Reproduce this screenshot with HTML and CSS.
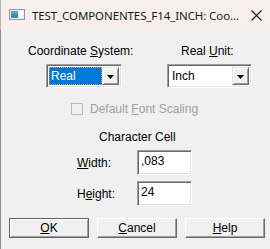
FILE: index.html
```html
<!DOCTYPE html>
<html>
<head>
<meta charset="utf-8">
<link rel="stylesheet" href="styles.css">
</head>
<body>
<div class="window">
  <div class="titlebar">
    <svg class="appicon" width="16" height="11" viewBox="0 0 16 11">
      <rect x="0.5" y="0.5" width="15" height="10" fill="#e8eef2" stroke="#8a9aa6"/>
      <rect x="2" y="2" width="7" height="7" fill="#3f8f8a"/>
      <rect x="2" y="2" width="7" height="3" fill="#5aa0d8"/>
      <rect x="10" y="2" width="4" height="7" fill="#ffffff"/>
    </svg>
    <span class="title">TEST_COMPONENTES_F14_INCH: Coo...</span>
    <svg class="close" width="11" height="11" viewBox="0 0 11 11">
      <path d="M0.5 0.5 L10.5 10.5 M10.5 0.5 L0.5 10.5" stroke="#1c1c1c" stroke-width="1.1" fill="none"/>
    </svg>
  </div>
  <div class="client">
    <div class="top-row">
      <div class="field coord">
        <div class="label">Coordinate <u>S</u>ystem:</div>
        <div class="combo combo-coord">
          <span class="combo-value selected"><span>Real</span></span>
          <span class="combo-btn"><svg width="7" height="4" viewBox="0 0 7 4"><path d="M0 0 H7 L3.5 4 Z" fill="#000"/></svg></span>
        </div>
      </div>
      <div class="field unit">
        <div class="label">Real <u>U</u>nit:</div>
        <div class="combo combo-unit">
          <span class="combo-value">Inch</span>
          <span class="combo-btn"><svg width="7" height="4" viewBox="0 0 7 4"><path d="M0 0 H7 L3.5 4 Z" fill="#000"/></svg></span>
        </div>
      </div>
    </div>
    <div class="check-row">
      <span class="checkbox"></span>
      <span class="check-label">Default <u>F</u>ont Scaling</span>
    </div>
    <div class="group-title">Character Cell</div>
    <div class="edit-row">
      <span class="edit-label"><u>W</u>idth:</span>
      <div class="edit">,083</div>
    </div>
    <div class="edit-row second">
      <span class="edit-label">H<u>e</u>ight:</span>
      <div class="edit">24</div>
    </div>
    <div class="buttons">
      <div class="btn default"><u>O</u>K</div>
      <div class="btn"><u>C</u>ancel</div>
      <div class="btn"><u>H</u>elp</div>
    </div>
  </div>
</div>
</body>
</html>
```

FILE: styles.css
```css
* { box-sizing: border-box; }
html, body { margin: 0; padding: 0; background: #ffffff; }
body { width: 270px; height: 249px; overflow: hidden; }

.window {
  width: 270px;
  height: 249px;
  display: flex;
  flex-direction: column;
  font-family: "Liberation Sans", Arial, sans-serif;
  font-size: 12px;
  color: #000;
}

.titlebar {
  height: 30px;
  flex: none;
  background: #f6efee;
  border-left: 1px solid #b8b2b2;
  display: flex;
  align-items: center;
  padding-left: 8px;
}
.appicon { flex: none; margin-top: -1px; }
.title {
  font-family: "Noto Sans", "Open Sans", sans-serif;
  font-size: 11.5px;
  color: #1a1a1a;
  margin-left: 7px;
  white-space: nowrap;
  letter-spacing: -0.1px;
}
.close { margin-left: auto; margin-right: 8px; flex: none; }

.client {
  flex: 1;
  background: #f0f0f0;
  border-left: 1px solid #8e8e8e;
  padding-top: 14px;
}

u { text-decoration: underline; text-underline-offset: 1px; }

.top-row { display: flex; }
.label { height: 15px; line-height: 15px; white-space: nowrap; }
.coord { margin-left: 27px; width: 139px; }
.coord .combo { margin-left: 18px; width: 76px; }
.unit .label { padding-left: 14px; }
.unit .combo { width: 85px; }

.combo {
  margin-top: 5px;
  height: 24px;
  background: #fff;
  border-top: 1px solid #a0a0a0;
  border-left: 1px solid #a0a0a0;
  border-right: 1px solid #ffffff;
  border-bottom: 1px solid #ffffff;
  box-shadow: inset 1px 1px 0 #696969, inset -1px -1px 0 #e3e3e3;
  display: flex;
  padding: 2px;
}
.combo-value {
  flex: 1;
  display: flex;
  align-items: center;
  padding-left: 2px;
  line-height: 18px;
}
.combo-value.selected {
  background: #0078d7;
  color: #fff;
  border: 1px dotted #e9a13b;
  padding-left: 1px;
}
.combo-btn {
  width: 17px;
  height: 18px;
  flex: none;
  background: #f0f0f0;
  border-top: 1px solid #e3e3e3;
  border-left: 1px solid #e3e3e3;
  border-right: 1px solid #696969;
  border-bottom: 1px solid #696969;
  box-shadow: inset 1px 1px 0 #ffffff, inset -1px -1px 0 #a0a0a0;
  display: flex;
  align-items: center;
  justify-content: center;
}
.combo-btn svg { margin-top: 1px; }

.check-row {
  margin-top: 14px;
  height: 14px;
  padding-left: 70px;
  display: flex;
  align-items: center;
  color: #a0a0a0;
}
.checkbox {
  width: 12px;
  height: 12px;
  border: 1px solid #bcbcbc;
  background: #f0f0f0;
  flex: none;
}
.check-label { margin-left: 7px; white-space: nowrap; }

.group-title {
  margin-top: 14px;
  height: 15px;
  line-height: 15px;
  padding-left: 98px;
  color: #000;
}

.edit-row {
  margin-top: 5px;
  display: flex;
  align-items: center;
  height: 25px;
}
.edit-row.second { margin-top: 6px; }
.edit-label {
  flex: none;
  width: 136px;
  padding-left: 76px;
}
.edit {
  width: 55px;
  height: 25px;
  background: #fff;
  border-top: 1px solid #a0a0a0;
  border-left: 1px solid #a0a0a0;
  border-right: 1px solid #ffffff;
  border-bottom: 1px solid #ffffff;
  box-shadow: inset 1px 1px 0 #696969, inset -1px -1px 0 #e3e3e3;
  padding: 2px 3px;
  line-height: 16px;
}

.buttons {
  margin-top: 12px;
  padding-left: 8px;
  display: flex;
  gap: 8px;
}
.btn {
  width: 80px;
  height: 20px;
  background: #f0f0f0;
  border-top: 1px solid #ffffff;
  border-left: 1px solid #ffffff;
  border-right: 1px solid #696969;
  border-bottom: 1px solid #696969;
  box-shadow: inset -1px -1px 0 #a0a0a0;
  display: flex;
  align-items: center;
  justify-content: center;
  line-height: 16px;
}
.btn.default {
  border: 1px solid #646464;
  box-shadow: inset 1px 1px 0 #ffffff, inset -1px -1px 0 #a0a0a0;
}
```
